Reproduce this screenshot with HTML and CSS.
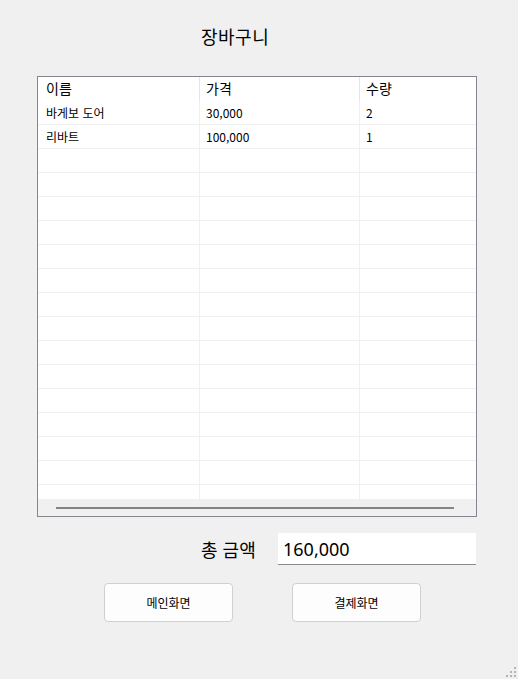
FILE: index.html
```html
<!DOCTYPE html>
<html lang="ko">
<head>
<meta charset="utf-8">
<link rel="stylesheet" href="styles.css">
</head>
<body>
<div class="window">
  <div class="title">장바구니</div>
  <div class="table">
    <div class="thead">
      <div class="hc c1">이름</div>
      <div class="hc c2">가격</div>
      <div class="hc c3">수량</div>
    </div>
    <div class="tbody">
      <div class="row"><div class="cell c1">바게보 도어</div><div class="cell c2">30,000</div><div class="cell c3">2</div></div>
      <div class="row"><div class="cell c1">리바트</div><div class="cell c2">100,000</div><div class="cell c3">1</div></div>
      <div class="row"><div class="cell c1"></div><div class="cell c2"></div><div class="cell c3"></div></div>
      <div class="row"><div class="cell c1"></div><div class="cell c2"></div><div class="cell c3"></div></div>
      <div class="row"><div class="cell c1"></div><div class="cell c2"></div><div class="cell c3"></div></div>
      <div class="row"><div class="cell c1"></div><div class="cell c2"></div><div class="cell c3"></div></div>
      <div class="row"><div class="cell c1"></div><div class="cell c2"></div><div class="cell c3"></div></div>
      <div class="row"><div class="cell c1"></div><div class="cell c2"></div><div class="cell c3"></div></div>
      <div class="row"><div class="cell c1"></div><div class="cell c2"></div><div class="cell c3"></div></div>
      <div class="row"><div class="cell c1"></div><div class="cell c2"></div><div class="cell c3"></div></div>
      <div class="row"><div class="cell c1"></div><div class="cell c2"></div><div class="cell c3"></div></div>
      <div class="row"><div class="cell c1"></div><div class="cell c2"></div><div class="cell c3"></div></div>
      <div class="row"><div class="cell c1"></div><div class="cell c2"></div><div class="cell c3"></div></div>
      <div class="row"><div class="cell c1"></div><div class="cell c2"></div><div class="cell c3"></div></div>
      <div class="row"><div class="cell c1"></div><div class="cell c2"></div><div class="cell c3"></div></div>
      <div class="row"><div class="cell c1"></div><div class="cell c2"></div><div class="cell c3"></div></div>
      <div class="row"><div class="cell c1"></div><div class="cell c2"></div><div class="cell c3"></div></div>
    </div>
    <div class="hscroll"><div class="thumb"></div></div>
  </div>
  <div class="total">
    <span class="total-label">총 금액</span>
    <div class="total-input">160,000</div>
  </div>
  <div class="buttons">
    <button class="btn">메인화면</button>
    <button class="btn">결제화면</button>
  </div>
  <svg class="grip" width="12" height="12" viewBox="0 0 12 12">
    <rect x="9" y="1" width="2" height="2" fill="#b4b4b4"/>
    <rect x="5" y="5" width="2" height="2" fill="#b4b4b4"/>
    <rect x="9" y="5" width="2" height="2" fill="#b4b4b4"/>
    <rect x="1" y="9" width="2" height="2" fill="#b4b4b4"/>
    <rect x="5" y="9" width="2" height="2" fill="#b4b4b4"/>
    <rect x="9" y="9" width="2" height="2" fill="#b4b4b4"/>
  </svg>
</div>
</body>
</html>
```

FILE: styles.css
```css
html, body {
  margin: 0;
  padding: 0;
  background: #f0f0f0;
}
.window {
  position: relative;
  width: 518px;
  height: 679px;
  font-family: "Noto Sans CJK KR", "Noto Sans", sans-serif;
  color: #000;
  display: flex;
  flex-direction: column;
}
.title {
  padding: 23px 0 0 201px;
  height: 26px;
  font-size: 18px;
  line-height: 26px;
  letter-spacing: 0.5px;
}
.table {
  margin: 27px 0 0 37px;
  width: 438px;
  border: 1px solid #828790;
  background: #fff;
  display: flex;
  flex-direction: column;
}
.thead {
  display: grid;
  grid-template-columns: 161px 160px 117px;
  height: 24px;
}
.hc {
  font-size: 14px;
  line-height: 22px;
  height: 24px;
}
.hc.c1 { padding-left: 8px; }
.hc.c2 { padding-left: 6px; border-left: 1px solid #e5e5e5; }
.hc.c3 { padding-left: 6px; border-left: 1px solid #e5e5e5; }
.tbody {
  height: 398px;
  overflow: hidden;
}
.row {
  display: grid;
  grid-template-columns: 161px 160px 117px;
  height: 23px;
  border-bottom: 1px solid #f0f0f0;
}
.cell {
  font-size: 12px;
  line-height: 23px;
  height: 23px;
}
.cell.c1 { padding-left: 8px; }
.cell.c2 { padding-left: 6px; border-left: 1px solid #f0f0f0; }
.cell.c3 { padding-left: 6px; border-left: 1px solid #f0f0f0; }
.hscroll {
  height: 17px;
  background: #f0f0f0;
  display: flex;
  align-items: center;
  padding-left: 18px;
}
.thumb {
  width: 398px;
  height: 2px;
  background: #858585;
}
.total {
  margin-top: 16px;
  display: flex;
  align-items: center;
  padding-left: 201px;
}
.total-label {
  font-size: 18px;
  width: 77px;
}
.total-input {
  width: 193px;
  height: 31px;
  padding-left: 5px;
  background: #fff;
  border-bottom: 1px solid #8a8a8a;
  font-family: "Noto Sans", "Noto Sans CJK KR", sans-serif;
  font-size: 18px;
  line-height: 32px;
}
.buttons {
  margin-top: 18px;
  display: flex;
  padding-left: 104px;
  gap: 59px;
}
.btn {
  width: 129px;
  height: 39px;
  background: #fdfdfd;
  border: 1px solid #d0d0d0;
  border-radius: 4px;
  font-family: "Noto Sans CJK KR", sans-serif;
  font-size: 12px;
  color: #000;
  padding: 0;
}
.grip {
  position: absolute;
  right: 1px;
  bottom: 1px;
}
```
